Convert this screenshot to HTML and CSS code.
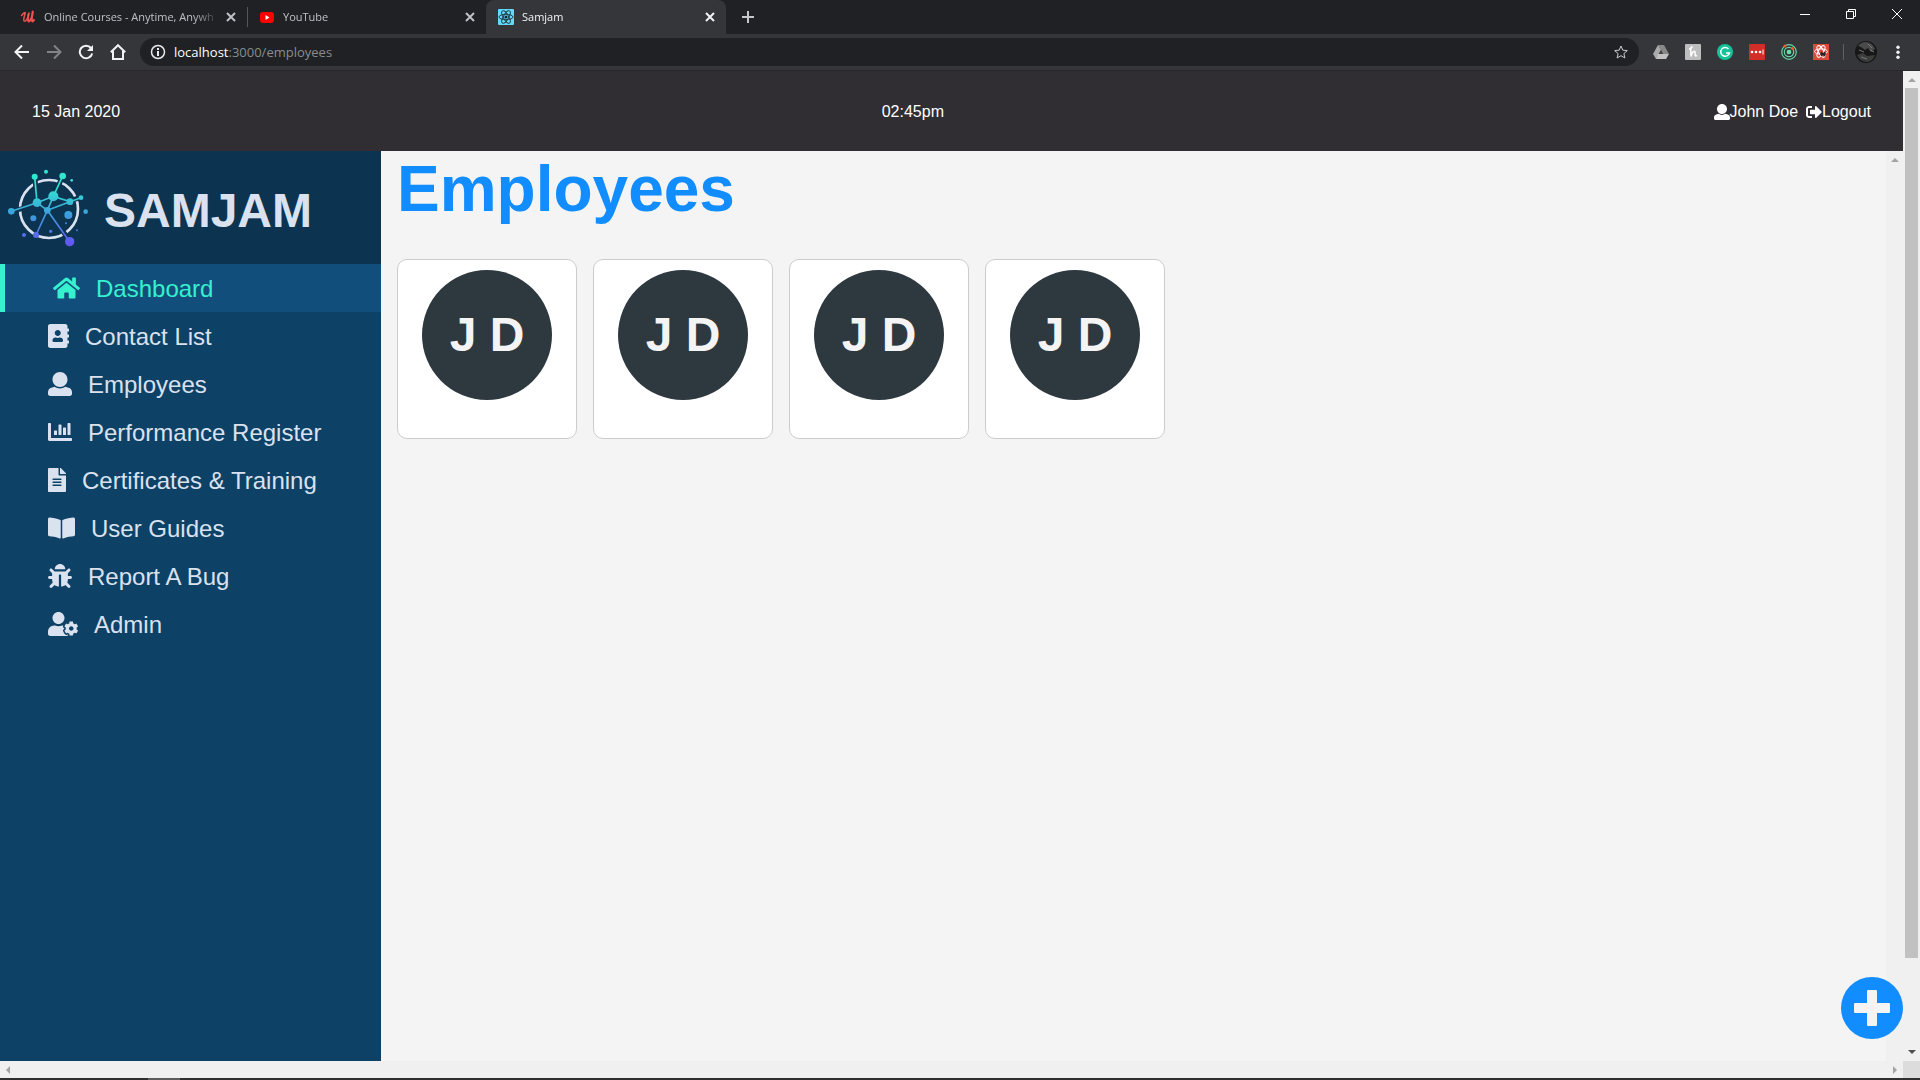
FILE: index.html
```html
<!DOCTYPE html>
<html lang="en">
<head>
<meta charset="utf-8">
<title>Samjam</title>
<link rel="stylesheet" href="styles.css">
</head>
<body>
<div class="window">
  <div class="tabstrip">
    <div class="tab">
      <svg class="favicon" viewBox="0 0 16 16" fill="none" stroke="#eb5252" stroke-linecap="round" stroke-linejoin="round"><path stroke-width="1.500" d="M1.500 6.500C3 5 4 3.500 5 3.500S3 9 3.800 11.500C5 14 8.500 9 9 4"/><path stroke-width="2" d="M8.500 5C8 9 7.500 12.500 9 12.500C11 11 12.800 6 12.800 3S11 12.500 12.500 12.500L14 11"/></svg>
      <span class="tab-title">Online Courses - Anytime, Anywh</span>
      <button class="tab-close" aria-label="Close tab"><svg viewBox="0 0 10 10"><path d="M1 1l8 8M9 1l-8 8"/></svg></button>
    </div>
    <span class="tab-divider"></span>
    <div class="tab">
      <svg class="favicon" viewBox="0 0 16 16"><rect x="1" y="3" width="14" height="11" rx="3" fill="#f00"/><path d="M6.500 6l4 2.500-4 2.500z" fill="#fff"/></svg>
      <span class="tab-title">YouTube</span>
      <button class="tab-close" aria-label="Close tab"><svg viewBox="0 0 10 10"><path d="M1 1l8 8M9 1l-8 8"/></svg></button>
    </div>
    <div class="tab tab-active">
      <svg class="favicon" viewBox="0 0 16 16"><rect width="16" height="16" rx="1" fill="#61dafb"/><g fill="none" stroke="#24404b"><ellipse cx="8" cy="8" rx="7" ry="2.700"/><ellipse cx="8" cy="8" rx="7" ry="2.700" transform="rotate(60 8 8)"/><ellipse cx="8" cy="8" rx="7" ry="2.700" transform="rotate(120 8 8)"/></g><circle cx="8" cy="8" r="1.500" fill="#14252c"/></svg>
      <span class="tab-title">Samjam</span>
      <button class="tab-close" aria-label="Close tab"><svg viewBox="0 0 10 10"><path d="M1 1l8 8M9 1l-8 8"/></svg></button>
    </div>
    <button class="new-tab" aria-label="New tab"><svg viewBox="0 0 12 12"><path d="M6 0v12M0 6h12"/></svg></button>
    <div class="window-controls">
      <button aria-label="Minimize"><svg viewBox="0 0 10 10"><path d="M0 5.500h10"/></svg></button>
      <button aria-label="Restore"><svg viewBox="0 0 10 10"><path d="M.5 2.500h7v7h-7zM2.500 2.500v-2h7v7h-2"/></svg></button>
      <button aria-label="Close"><svg viewBox="0 0 10 10"><path d="M0 0l10 10M10 0L0 10"/></svg></button>
    </div>
  </div>

  <div class="toolbar">
    <button class="tool" aria-label="Back"><svg viewBox="0 0 16 16"><path d="M15 8H2M8 1.500L1.500 8 8 14.500"/></svg></button>
    <button class="tool tool-off" aria-label="Forward"><svg viewBox="0 0 16 16"><path d="M1 8h13M8 1.500L14.500 8 8 14.500"/></svg></button>
    <button class="tool" aria-label="Reload"><svg viewBox="0 0 16 16"><path d="M13 4A6.300 6.300 0 1 0 14.200 9.500"/><path d="M15 1v6H9z" fill="#f1f3f4" stroke="none"/></svg></button>
    <button class="tool" aria-label="Home"><svg viewBox="0 0 16 16"><path d="M.8 8.200L8 1.200l7.200 7M3 7v8h10V7"/></svg></button>
    <div class="omnibox">
      <svg class="info" viewBox="0 0 16 16"><circle cx="8" cy="8" r="6.500" fill="none" stroke="#e8eaed" stroke-width="1.500"/><path d="M8 4v2M8 7v5" stroke="#e8eaed" stroke-width="2"/></svg>
      <span class="url"><span class="host">localhost</span>:3000/employees</span>
      <button class="tool star" aria-label="Bookmark"><svg viewBox="0 0 16 16"><path d="M8 2l1.800 4.200 4.500.4-3.400 3 1 4.400L8 11.700 4.100 14l1-4.400-3.400-3 4.500-.4z"/></svg></button>
    </div>
    <div class="extensions">
      <button class="tool" aria-label="Drive"><svg viewBox="0 0 16 16" stroke="none"><path d="M5 1h6l5 9h-6z" fill="#888"/><path d="M5 1l3 5-5 9-3-5z" fill="#aaa"/><path d="M5 10h11l-3 5H3z" fill="#c2c2c2"/><path d="M8 6l2 4H5.800z" fill="#444"/></svg></button>
      <button class="tool" aria-label="Honey"><svg viewBox="0 0 16 16"><rect width="16" height="16" rx="1" fill="#bdbdbd" stroke="none"/><path d="M4 5c2 0 4-3 2.500-2S6 8 6 12.500C7 8 9.500 6 10 8s-1 5 2 3.500" stroke="#fff" stroke-width="1.500"/></svg></button>
      <button class="tool" aria-label="Grammar"><svg viewBox="0 0 16 16"><circle cx="8" cy="8" r="8" fill="#15c39a" stroke="none"/><path d="M11.500 5A4.400 4.400 0 1 0 12.400 9H9" stroke="#fff" stroke-width="1.500"/></svg></button>
      <button class="tool" aria-label="Passwords"><svg viewBox="0 0 16 16"><rect width="16" height="16" rx="1" fill="#d32d27" stroke="none"/><g fill="#fff" stroke="none"><circle cx="3" cy="8" r="1.300"/><circle cx="7" cy="8" r="1.300"/><circle cx="11" cy="8" r="1.300"/><path d="M13.500 5.500h1v5h-1z"/></g></svg></button>
      <button class="tool" aria-label="Orbit"><svg viewBox="0 0 16 16"><g stroke="#5fd6a0" stroke-width="1.200"><circle cx="8" cy="8" r="7.300"/><circle cx="8" cy="8" r="4.700"/></g><circle cx="8" cy="8" r="2.300" fill="#66e0b0" stroke="none"/><g fill="#f0592a" stroke="none"><circle cx="4" cy="2" r="1.500"/><circle cx="11.500" cy="4.500" r="1.500"/></g></svg></button>
      <button class="tool" aria-label="React tools"><svg viewBox="0 0 16 16"><rect width="16" height="16" fill="#d94a38" stroke="none"/><g stroke="#fff" stroke-width="1"><ellipse cx="8" cy="7.500" rx="6.500" ry="2.600"/><ellipse cx="8" cy="7.500" rx="6.500" ry="2.600" transform="rotate(60 8 7.500)"/><ellipse cx="8" cy="7.500" rx="6.500" ry="2.600" transform="rotate(120 8 7.500)"/></g><path d="M8 8l4 4M12 8l-4 4M7 10h6" stroke="#222" stroke-width="1.300"/></svg></button>
    </div>
    <span class="tool-divider"></span>
    <svg class="avatar" viewBox="0 0 22 22"><circle cx="11" cy="11" r="11" fill="#171717"/><path d="M3 5q3-4 8-4 7 1 9 7l-4 3-3-4-3 2-4-3z" fill="#4a4a4a"/><path d="M2 14l6-2 4 3 8-1q-2 6-8 7-7 0-10-7z" fill="#3b3d3b"/><path d="M13 3l4 4M4 9l5 2M15 9l4 2M6 16l6 2" stroke="#777" stroke-width="1"/></svg>
    <button class="tool" aria-label="Menu"><svg viewBox="0 0 16 16" fill="#f1f3f4" stroke="none"><circle cx="8" cy="3.300" r="1.700"/><circle cx="8" cy="8.300" r="1.700"/><circle cx="8" cy="13.300" r="1.700"/></svg></button>
  </div>

  <div class="viewport">
    <div class="app">
      <header class="topbar">
        <span>15 Jan 2020</span>
        <span>02:45pm</span>
        <div class="account">
          <a href="#profile"><svg class="icon-sm" viewBox="0 0 512 512"><path d="M256 0c88.366 0 160 71.634 160 160s-71.634 160-160 160S96 248.366 96 160 167.634 0 256 0zm183.283 333.821l-71.313-17.828c-74.923 53.890-165.738 41.864-223.940 0l-71.313 17.828C29.981 344.505 0 382.903 0 426.955V464c0 26.510 21.490 48 48 48h416c26.510 0 48-21.490 48-48v-37.045c0-44.052-29.981-82.450-72.717-93.134z"/></svg>John Doe</a>
          <a href="#logout"><svg class="icon-sm" viewBox="0 0 512 512"><path d="M497 273L329 441c-15 15-41 4.500-41-17v-96H152c-13.300 0-24-10.700-24-24v-96c0-13.300 10.700-24 24-24h136V88c0-21.400 25.900-32 41-17l168 168c9.300 9.400 9.300 24.600 0 34zM192 436v-40c0-6.600-5.400-12-12-12H96c-17.700 0-32-14.300-32-32V160c0-17.700 14.300-32 32-32h84c6.600 0 12-5.400 12-12V76c0-6.600-5.400-12-12-12H96c-53 0-96 43-96 96v192c0 53 43 96 96 96h84c6.600 0 12-5.400 12-12z"/></svg>Logout</a>
        </div>
      </header>
      <div class="body">
        <aside class="sidebar">
          <div class="brand">
            <svg class="logo" viewBox="24 24 240 240">
              <defs><linearGradient id="fade" gradientUnits="userSpaceOnUse" x1="0" y1="80" x2="0" y2="260"><stop offset="0" stop-color="#33e6d0"/><stop offset=".45" stop-color="#3ba0dc"/><stop offset="1" stop-color="#6650f5"/></linearGradient></defs>
              <circle cx="147" cy="147" r="87" fill="none" stroke="#dae1ef" stroke-width="8"/>
              <g fill="none" stroke="#0c334f" stroke-width="15"><path d="M104 50l4 36M188 48l-18 42M222 119l20-8M54 149l16-4M114 212l-6 14M190 216l14 20"/></g>
              <g fill="none" stroke="url(#fade)" stroke-width="5"><path d="M104 50l7 78M188 48l-28 61M34 154l77-26 49-19 50 16 33-12M111 128l31 23 18-42M142 151l68-26M142 151l-34 74M142 151l67 94"/></g>
              <g fill="url(#fade)"><circle cx="104" cy="50" r="9"/><circle cx="188" cy="48" r="10"/><circle cx="138" cy="35" r="6"/><circle cx="215" cy="61" r="4"/><circle cx="243" cy="113" r="7"/><circle cx="160" cy="109" r="15"/><circle cx="111" cy="128" r="13"/><circle cx="210" cy="125" r="10"/><circle cx="142" cy="151" r="10"/><circle cx="34" cy="154" r="10"/><circle cx="257" cy="155" r="7"/><circle cx="205" cy="165" r="12"/><circle cx="100" cy="175" r="9"/><circle cx="198" cy="190" r="3"/><circle cx="231" cy="211" r="3"/><circle cx="152" cy="214" r="5"/><circle cx="72" cy="225" r="6"/><circle cx="108" cy="225" r="9"/><circle cx="209" cy="245" r="14"/></g>
            </svg>
            <span class="brand-name">SAMJAM</span>
          </div>
          <nav class="nav">
            <a class="nav-item nav-current" href="#dashboard"><svg viewBox="0 0 576 512" class="icon"><path d="M280.370 148.260L96 300.110V464a16 16 0 0 0 16 16l112.060-.29a16 16 0 0 0 15.920-16V368a16 16 0 0 1 16-16h64a16 16 0 0 1 16 16v95.640a16 16 0 0 0 16 16.050L464 480a16 16 0 0 0 16-16V300L295.670 148.260a12.190 12.190 0 0 0-15.300 0zM571.600 251.470L488 182.560V44.050a12 12 0 0 0-12-12h-56a12 12 0 0 0-12 12v72.610L318.470 43a48 48 0 0 0-61 0L4.340 251.470a12 12 0 0 0-1.600 16.900l25.500 31A12 12 0 0 0 45.150 301l235.220-193.740a12.190 12.190 0 0 1 15.300 0L530.900 301a12 12 0 0 0 16.900-1.600l25.500-31a12 12 0 0 0-1.700-16.930z"/></svg><span class="label">Dashboard</span></a>
            <a class="nav-item" href="#contacts"><svg viewBox="0 0 448 512" class="icon"><path d="M436 160c6.600 0 12-5.400 12-12v-40c0-6.600-5.400-12-12-12h-20V48c0-26.500-21.500-48-48-48H48C21.500 0 0 21.500 0 48v416c0 26.500 21.500 48 48 48h320c26.500 0 48-21.500 48-48v-48h20c6.600 0 12-5.400 12-12v-40c0-6.600-5.400-12-12-12h-20v-64h20c6.600 0 12-5.400 12-12v-40c0-6.600-5.400-12-12-12h-20v-64h20zm-228-32c35.300 0 64 28.700 64 64s-28.700 64-64 64-64-28.700-64-64 28.700-64 64-64zm112 236.800c0 10.600-10 19.200-22.400 19.200H118.400C106 384 96 375.400 96 364.800v-19.200c0-31.800 30.100-57.600 67.200-57.600h5c12.300 5.100 25.700 8 39.800 8s27.600-2.900 39.800-8h5c37.100 0 67.200 25.800 67.200 57.600v19.200z"/></svg><span class="label">Contact List</span></a>
            <a class="nav-item" href="#employees"><svg viewBox="0 0 512 512" class="icon"><path d="M256 0c88.366 0 160 71.634 160 160s-71.634 160-160 160S96 248.366 96 160 167.634 0 256 0zm183.283 333.821l-71.313-17.828c-74.923 53.890-165.738 41.864-223.940 0l-71.313 17.828C29.981 344.505 0 382.903 0 426.955V464c0 26.510 21.490 48 48 48h416c26.510 0 48-21.490 48-48v-37.045c0-44.052-29.981-82.450-72.717-93.134z"/></svg><span class="label">Employees</span></a>
            <a class="nav-item" href="#performance"><svg viewBox="0 0 512 512" class="icon"><path d="M332.800 320h38.400c6.400 0 12.800-6.400 12.800-12.800V172.800c0-6.400-6.400-12.800-12.800-12.800h-38.400c-6.400 0-12.800 6.400-12.800 12.800v134.400c0 6.400 6.400 12.800 12.800 12.800zm96 0h38.400c6.400 0 12.800-6.400 12.800-12.800V76.800c0-6.400-6.400-12.800-12.800-12.800h-38.400c-6.400 0-12.800 6.400-12.800 12.800v230.400c0 6.400 6.400 12.800 12.800 12.800zm-288 0h38.400c6.400 0 12.800-6.400 12.800-12.800v-70.400c0-6.400-6.400-12.800-12.800-12.800h-38.400c-6.400 0-12.800 6.400-12.800 12.800v70.400c0 6.400 6.400 12.800 12.800 12.800zm96 0h38.400c6.400 0 12.800-6.400 12.800-12.800V108.800c0-6.400-6.400-12.800-12.800-12.800h-38.400c-6.400 0-12.800 6.400-12.800 12.800v198.400c0 6.400 6.400 12.800 12.800 12.800zM496 384H64V80c0-8.840-7.160-16-16-16H16C7.160 64 0 71.160 0 80v336c0 17.670 14.330 32 32 32h464c8.840 0 16-7.160 16-16v-32c0-8.840-7.160-16-16-16z"/></svg><span class="label">Performance Register</span></a>
            <a class="nav-item" href="#certificates"><svg viewBox="0 0 384 512" class="icon"><path d="M224 136V0H24C10.700 0 0 10.700 0 24v464c0 13.300 10.700 24 24 24h336c13.300 0 24-10.700 24-24V160H248c-13.200 0-24-10.800-24-24zm64 236c0 6.600-5.400 12-12 12H108c-6.600 0-12-5.400-12-12v-8c0-6.600 5.400-12 12-12h168c6.600 0 12 5.400 12 12v8zm0-64c0 6.600-5.400 12-12 12H108c-6.600 0-12-5.400-12-12v-8c0-6.600 5.400-12 12-12h168c6.600 0 12 5.400 12 12v8zm0-72v8c0 6.600-5.400 12-12 12H108c-6.600 0-12-5.400-12-12v-8c0-6.600 5.400-12 12-12h168c6.600 0 12 5.400 12 12zm96-114.100v6.100H256V0h6.100c6.400 0 12.500 2.500 17 7l97.900 98c4.500 4.500 7 10.600 7 16.900z"/></svg><span class="label">Certificates &amp; Training</span></a>
            <a class="nav-item" href="#guides"><svg viewBox="0 0 576 512" class="icon"><path d="M542.220 32.050c-54.800 3.110-163.720 14.430-230.960 55.590-4.640 2.840-7.270 7.890-7.270 13.170v363.870c0 11.550 12.630 18.850 23.280 13.490 69.180-34.820 169.230-44.320 218.700-46.920 16.890-.89 30.020-14.430 30.020-30.660V62.750c.01-17.710-15.350-31.740-33.770-30.700zM264.730 87.640C197.500 46.480 88.580 35.170 33.780 32.050 15.360 31.010 0 45.040 0 62.750V400.600c0 16.240 13.130 29.780 30.020 30.660 49.490 2.600 149.590 12.110 218.770 46.950 10.620 5.350 23.210-1.940 23.210-13.460V100.630c0-5.290-2.620-10.140-7.270-12.990z"/></svg><span class="label">User Guides</span></a>
            <a class="nav-item" href="#bug"><svg viewBox="0 0 512 512" class="icon"><path d="M511.988 288.900c-.478 17.430-15.217 31.100-32.653 31.100H424v16c0 21.864-4.882 42.584-13.600 61.145l60.228 60.228c12.496 12.497 12.496 32.758 0 45.255-12.498 12.497-32.759 12.496-45.256 0l-54.736-54.736C345.886 467.965 314.351 480 280 480V236c0-6.627-5.373-12-12-12h-24c-6.627 0-12 5.373-12 12v244c-34.351 0-65.886-12.035-90.636-32.108l-54.736 54.736c-12.498 12.497-32.759 12.496-45.256 0-12.496-12.497-12.496-32.758 0-45.255l60.228-60.228C92.882 378.584 88 357.864 88 336v-16H32.666C15.230 320 .491 306.330.013 288.900-.484 270.816 14.028 256 32 256h56v-58.745l-46.628-46.628c-12.496-12.497-12.496-32.758 0-45.255 12.498-12.497 32.758-12.497 45.256 0L141.255 160h229.489l54.627-54.627c12.498-12.497 32.758-12.497 45.256 0 12.496 12.497 12.496 32.758 0 45.255L424 197.255V256h56c17.972 0 32.484 14.816 31.988 32.900zM257 0c-61.856 0-112 50.144-112 112h224C369 50.144 318.856 0 257 0z"/></svg><span class="label">Report A Bug</span></a>
            <a class="nav-item" href="#admin"><svg viewBox="0 0 640 512" class="icon"><path d="M610.500 373.300c2.600-14.100 2.600-28.500 0-42.600l25.800-14.900c3-1.700 4.300-5.200 3.300-8.500-6.700-21.600-18.200-41.200-33.200-57.400-2.300-2.500-6-3.100-9-1.400l-25.800 14.900c-10.900-9.300-23.400-16.500-36.900-21.300v-29.800c0-3.400-2.400-6.400-5.700-7.100-22.300-5-45-4.800-66.200 0-3.300.7-5.700 3.700-5.700 7.100v29.800c-13.500 4.800-26 12-36.900 21.300l-25.800-14.900c-2.900-1.700-6.700-1.100-9 1.400-15 16.200-26.500 35.800-33.200 57.400-1 3.300.4 6.800 3.300 8.500l25.800 14.900c-2.600 14.100-2.600 28.500 0 42.600l-25.800 14.900c-3 1.700-4.300 5.200-3.300 8.500 6.700 21.600 18.200 41.100 33.200 57.400 2.300 2.500 6 3.100 9 1.400l25.800-14.900c10.900 9.300 23.400 16.500 36.900 21.300v29.800c0 3.400 2.400 6.400 5.700 7.100 22.300 5 45 4.800 66.200 0 3.300-.7 5.700-3.700 5.700-7.100v-29.800c13.500-4.800 26-12 36.900-21.300l25.800 14.900c2.900 1.700 6.700 1.100 9-1.400 15-16.200 26.500-35.800 33.200-57.400 1-3.300-.4-6.800-3.300-8.500l-25.800-14.900zM496 400.500c-26.800 0-48.500-21.800-48.500-48.500s21.800-48.500 48.500-48.500 48.500 21.800 48.500 48.500-21.700 48.500-48.500 48.500zM224 256c70.700 0 128-57.300 128-128S294.700 0 224 0 96 57.300 96 128s57.300 128 128 128zm201.200 226.500c-2.300-1.200-4.600-2.600-6.800-3.900l-7.900 4.600c-6 3.400-12.800 5.300-19.600 5.300-10.900 0-21.400-4.600-28.900-12.600-18.300-19.800-32.300-43.900-40.200-69.600-5.500-17.700 1.900-36.400 17.900-45.700l7.900-4.600c-.1-2.600-.1-5.200 0-7.800l-7.900-4.600c-16-9.200-23.400-28-17.900-45.700.9-2.900 2.200-5.800 3.200-8.700-3.800-.3-7.500-1.200-11.400-1.200h-16.700c-22.200 10.200-46.900 16-72.900 16s-50.600-5.800-72.900-16h-16.700C60.200 288 0 348.200 0 422.400V464c0 26.500 21.500 48 48 48h352c10.100 0 19.500-3.200 27.200-8.500-1.200-3.800-2-7.700-2-11.800v-9.200z"/></svg><span class="label">Admin</span></a>
          </nav>
        </aside>
        <main class="content">
          <h1>Employees</h1>
          <div class="cards">
            <article class="card"><div class="initials">J D</div></article>
            <article class="card"><div class="initials">J D</div></article>
            <article class="card"><div class="initials">J D</div></article>
            <article class="card"><div class="initials">J D</div></article>
          </div>
        </main>
        <div class="vbar"><span class="arrow up"></span></div>
      </div>
      <button class="add" aria-label="Add employee"><svg viewBox="0 0 36 36"><path d="M14 0h8q1 0 1 1v12h12q1 0 1 1v8q0 1-1 1H23v12q0 1-1 1h-8q-1 0-1-1V23H1q-1 0-1-1v-8q0-1 1-1h12V1q0-1 1-1z"/></svg></button>
    </div>
    <div class="vbar">
      <span class="arrow up"></span>
      <span class="track"><span class="thumb"></span></span>
      <span class="arrow down"></span>
    </div>
  </div>
  <div class="hbar"><span class="arrow left"></span><span class="arrow right"></span><span class="corner"></span></div>
  <div class="taskbar"><span class="task"></span></div>
</div>
</body>
</html>
```

FILE: styles.css
```css
* { box-sizing: border-box; }
body { margin: 0; font-family: "Liberation Sans", Arial, sans-serif; }
button { border: 0; padding: 0; background: none; display: flex; align-items: center; justify-content: center; }
a { color: inherit; text-decoration: none; }
svg { display: block; flex: none; }

.window { min-height: 100vh; display: flex; flex-direction: column; }

/* Browser frame */
.tabstrip { display: flex; align-items: center; height: 34px; padding-left: 8px; background: #202124; font: 11px "Open Sans", "Noto Sans", sans-serif; color: #bdc1c6; }
.tab { display: flex; align-items: center; width: 239px; height: 34px; padding: 0 11px 0 12px; }
.tab-divider { width: 1px; height: 20px; margin-right: -1px; background: #54565a; }
.favicon { width: 16px; height: 16px; margin-right: 8px; }
.tab-title { flex: 1; white-space: nowrap; line-height: 20px; -webkit-mask-image: linear-gradient(to right, #000 85%, transparent); mask-image: linear-gradient(to right, #000 85%, transparent); }
.tab-close { margin-left: 6px; }
.tab-close svg { width: 10px; height: 10px; stroke: #bdc1c6; stroke-width: 2; }
.tab-active { width: 240px; background: #35363a; border-radius: 8px 8px 0 0; color: #f1f3f4; }
.tab-active .tab-close svg { stroke: #f1f3f4; }
.new-tab { width: 44px; height: 34px; }
.new-tab svg { width: 12px; height: 12px; stroke: #c5c7ca; stroke-width: 2; }
.window-controls { display: flex; align-self: flex-start; margin-left: auto; height: 28px; }
.window-controls button { width: 46px; }
.window-controls svg { width: 10px; height: 10px; fill: none; stroke: #fff; stroke-width: 1; overflow: visible; }

.toolbar { display: flex; align-items: center; height: 37px; padding: 0 6px; background: #35363a; border-bottom: 1px solid #29292b; }
.tool { width: 32px; height: 28px; }
.tool svg { width: 16px; height: 16px; fill: none; stroke: #f1f3f4; stroke-width: 2; }
.tool-off svg { stroke: #818386; }
.tool svg[stroke="none"] { stroke: none; }
.tool svg[fill="#f1f3f4"] { fill: #f1f3f4; }
.omnibox { flex: 1; display: flex; align-items: center; height: 28px; margin: 0 6px; padding: 0 2px 0 10px; border-radius: 14px; background: #202124; }
.info { width: 16px; height: 16px; margin-right: 8px; }
.url { flex: 1; font: 13px "Open Sans", "Noto Sans", sans-serif; color: #898c90; }
.host { color: #fff; }
.star svg { stroke: #c9cbce; stroke-width: 1; }
.extensions { display: flex; }
.tool-divider { width: 1px; height: 16px; margin: 0 11px 0 6px; background: #5f6166; }
.avatar { width: 22px; height: 22px; margin-right: 5px; }

/* Page */
.viewport { flex: 1; display: flex; }
.app { position: relative; flex: 1; display: flex; flex-direction: column; background: #f4f4f4; }
.topbar { display: flex; align-items: center; justify-content: space-between; height: 80px; padding: 2px 32px 0; background: #302e33; color: #fff; font-size: 16px; }
.account { display: flex; gap: 8px; padding-left: 8px; }
.account a { display: flex; align-items: center; }
.icon-sm { height: 16px; fill: currentColor; }
.body { flex: 1; display: flex; }

.sidebar { width: 381px; background: #0e4166; color: #dae1ef; }
.brand { display: flex; align-items: center; gap: 16px; height: 113px; padding: 0 8px; background: #0c334f; }
.logo { width: 80px; height: 80px; }
.brand-name { padding-top: 6px; font-size: 48px; font-weight: bold; line-height: 48px; }
.nav-item { display: flex; align-items: center; gap: 16px; height: 48px; padding-left: 48px; font-size: 24px; white-space: nowrap; }
.nav-current { border-left: 5px solid #36f1cd; background: #124e7b; color: #36f1cd; }
.icon { height: 24px; fill: currentColor; }
.label { padding-top: 2px; }

.content { flex: 1; padding: 0 16px; }
h1 { margin: 0 0 32px; font-size: 64px; line-height: 76px; color: #118dff; }
.cards { display: flex; flex-wrap: wrap; gap: 16px; }
.card { width: 180px; height: 180px; padding: 10px; border: 1px solid #ccc; border-radius: 10px; background: #fff; }
.initials { display: flex; align-items: center; justify-content: center; width: 130px; height: 130px; margin: 0 auto; padding-bottom: 2px; border-radius: 50%; background: #2e383f; color: #f4f4f4; font-size: 48px; font-weight: bold; }
.add { position: absolute; right: 0; bottom: 22px; width: 62px; height: 62px; border-radius: 50%; background: #118dff; }
.add svg { width: 36px; height: 36px; fill: #f4f4f4; }

/* Scrollbars */
.vbar { display: flex; flex-direction: column; align-items: center; width: 17px; padding: 7px 0; background: #f0f0f0; }
.track { flex: 1; align-self: stretch; display: flex; padding: 6px 2px; }
.thumb { flex: 1; height: 91%; background: #c1c1c1; }
.arrow { width: 0; height: 0; border: 4px solid transparent; }
.up { border-top: 0; border-bottom-color: #a3a3a3; }
.down { border-bottom: 0; border-top-color: #505050; }
.left { border-left: 0; border-right-color: #a3a3a3; }
.right { margin-left: auto; margin-right: 6px; border-right: 0; border-left-color: #a3a3a3; }
.hbar { display: flex; align-items: center; height: 17px; padding-left: 6px; background: #f0f0f0; }
.corner { width: 17px; height: 17px; background: #dcdcdc; }
.taskbar { height: 2px; padding-left: 148px; background: #302e31; }
.task { display: block; width: 32px; height: 2px; background: #5c5c5c; }
```
